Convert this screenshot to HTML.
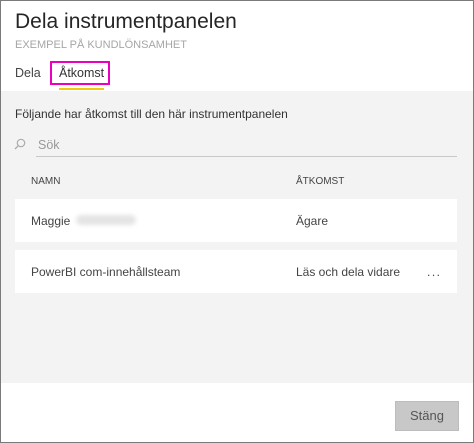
<!DOCTYPE html><html><head><style>
*{margin:0;padding:0;box-sizing:border-box}
body{width:474px;height:443px;background:#fff;font-family:"Liberation Sans",sans-serif;position:relative;overflow:hidden;color:#333}
.frame{position:absolute;left:0;top:0;width:474px;height:443px;border:1px solid #7a7a7a}
.a{position:absolute;white-space:nowrap}
</style></head><body>
<div class="a" style="left:15px;top:10px;font-size:21px;color:#252525">Dela instrumentpanelen</div>
<div class="a" style="left:15px;top:39px;font-size:11px;color:#a6a6a6">EXEMPEL PÅ KUNDLÖNSAMHET</div>
<div class="a" style="left:15px;top:66px;font-size:12.5px;color:#444">Dela</div>
<div class="a" style="left:59px;top:66px;font-size:12.5px;color:#333">Åtkomst</div>
<div class="a" style="left:50px;top:61px;width:60px;height:24px;border:2px solid #ec00c0"></div>
<div class="a" style="left:59px;top:88px;width:45px;height:2px;background:#f2c811"></div>
<div class="a" style="left:1px;top:91px;width:472px;height:292px;background:#f3f3f3"></div>
<div class="a" style="left:15px;top:107px;font-size:12px;color:#333">Följande har åtkomst till den här instrumentpanelen</div>
<svg class="a" style="left:14px;top:138px" width="12" height="12" viewBox="0 0 12 12"><circle cx="7" cy="5" r="3.7" fill="none" stroke="#aaa" stroke-width="1.2"/><line x1="4.3" y1="7.7" x2="1" y2="11" stroke="#aaa" stroke-width="1.3"/></svg>
<div class="a" style="left:38px;top:138px;font-size:12.5px;color:#999">Sök</div>
<div class="a" style="left:36px;top:156px;width:421px;height:1px;background:#c8c8c8"></div>
<div class="a" style="left:31px;top:176px;font-size:10px;color:#444">NAMN</div>
<div class="a" style="left:296px;top:176px;font-size:10px;color:#444">ÅTKOMST</div>
<div class="a" style="left:15px;top:199px;width:442px;height:43px;background:#fff"></div>
<div class="a" style="left:31px;top:214px;font-size:12px;color:#444">Maggie</div>
<div class="a" style="left:76px;top:215px;width:60px;height:10px;background:#e4e4e4;border-radius:5px;filter:blur(2px)"></div>
<div class="a" style="left:296px;top:214px;font-size:12px;color:#444">Ägare</div>
<div class="a" style="left:15px;top:250px;width:442px;height:43px;background:#fff"></div>
<div class="a" style="left:31px;top:265px;font-size:12px;color:#444">PowerBI com-innehållsteam</div>
<div class="a" style="left:296px;top:265px;font-size:12px;color:#444">Läs och dela vidare</div>
<div class="a" style="left:427px;top:265px;font-size:12px;color:#444;letter-spacing:1.5px">...</div>
<div class="a" style="left:395px;top:401px;width:64px;height:30px;background:#c8c8c8;border:1px solid #bdbdbd;font-size:13px;color:#555;text-align:center;line-height:28px">Stäng</div>
<div class="frame"></div>
</body></html>
